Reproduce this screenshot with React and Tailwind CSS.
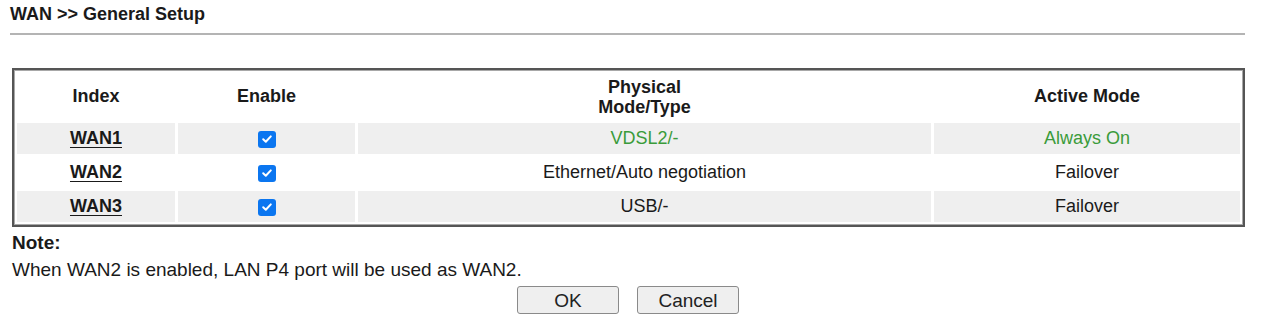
import React from "react";

const rows = [
  { name: "WAN1", type: "VDSL2/-", mode: "Always On", green: true, gray: true },
  { name: "WAN2", type: "Ethernet/Auto negotiation", mode: "Failover", green: false, gray: false },
  { name: "WAN3", type: "USB/-", mode: "Failover", green: false, gray: true },
];

function Check() {
  return (
    <span className="inline-flex h-[17px] w-[18px] items-center justify-center rounded-[3px] bg-[#0b76f0] align-middle">
      <svg width="12" height="12" viewBox="0 0 12 12" fill="none">
        <path d="M2.2 6.3 L4.8 8.8 L9.8 3.4" stroke="white" strokeWidth="2" strokeLinecap="round" strokeLinejoin="round" />
      </svg>
    </span>
  );
}

export default function App() {
  return (
    <div className="w-[1265px] h-[329px] bg-white text-[#1a1a1a] overflow-hidden" style={{ fontFamily: '"Liberation Sans", Arial, sans-serif' }}>
      <div className="pl-[10px] pt-[3px] text-[18px] leading-[22px] font-bold">WAN &gt;&gt; General Setup</div>
      <div className="ml-[10px] mr-[20px] mt-[8px] h-[2px] bg-[#b4b4b4]" />
      <div className="ml-[12px] mr-[20px] mt-[33px] border-2 border-[#555] shadow-[inset_0_0_0_1px_#a8a8a8]">
        <table className="w-full border-separate border-spacing-[3px] text-[18px]">
          <thead>
            <tr className="h-[47px]">
              <th className="w-[158px] font-bold">Index</th>
              <th className="w-[177px] font-bold">Enable</th>
              <th className="w-[573px] font-bold leading-[20px]">Physical<br />Mode/Type</th>
              <th className="font-bold">Active Mode</th>
            </tr>
          </thead>
          <tbody>
            {rows.map((r) => (
              <tr key={r.name} className="h-[31px]">
                <td className={`text-center font-bold underline underline-offset-[3px] ${r.gray ? "bg-[#efefef]" : ""}`}>{r.name}</td>
                <td className={`text-center ${r.gray ? "bg-[#efefef]" : ""}`}><Check /></td>
                <td className={`text-center ${r.green ? "text-[#3a9b3a]" : ""} ${r.gray ? "bg-[#efefef]" : ""}`}>{r.type}</td>
                <td className={`text-center ${r.green ? "text-[#3a9b3a]" : ""} ${r.gray ? "bg-[#efefef]" : ""}`}>{r.mode}</td>
              </tr>
            ))}
          </tbody>
        </table>
      </div>
      <div className="pl-[12px] pt-[2px] text-[19px] leading-[27px]">
        <div className="font-bold">Note:</div>
        <div>When WAN2 is enabled, LAN P4 port will be used as WAN2.</div>
      </div>
      <div className="flex justify-center gap-[18px] pr-[9px] mt-[3px]">
        <button className="h-[28px] w-[102px] rounded-[3px] border border-[#8a8a8a] bg-[#efefef] text-[19px] leading-none text-[#222]">OK</button>
        <button className="h-[28px] w-[102px] rounded-[3px] border border-[#8a8a8a] bg-[#efefef] text-[19px] leading-none text-[#222]">Cancel</button>
      </div>
    </div>
  );
}
